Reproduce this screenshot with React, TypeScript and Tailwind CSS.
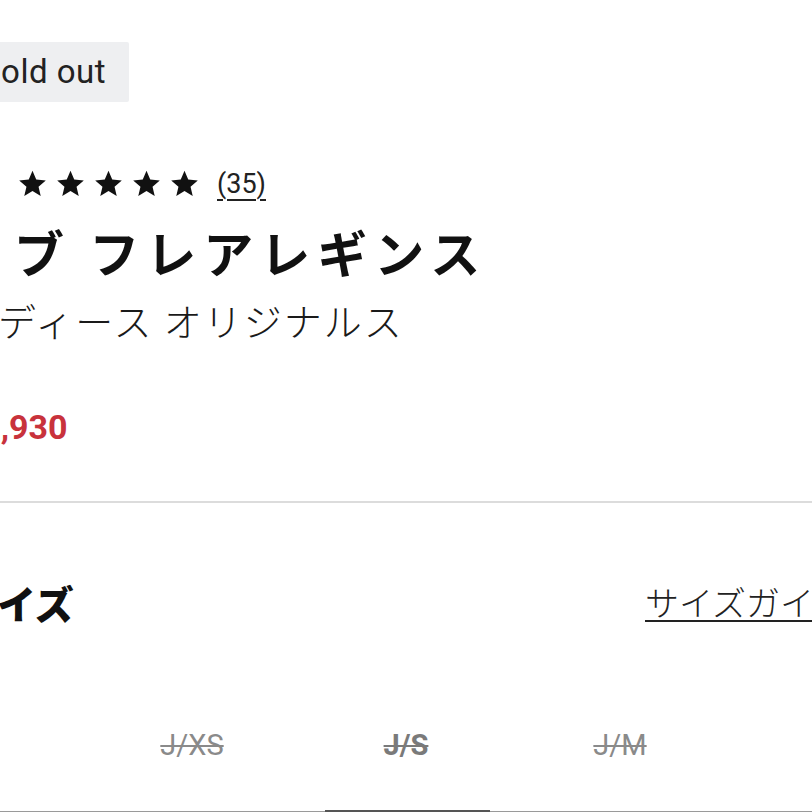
import React from 'react';

const jp = { fontFamily: '"Noto Sans CJK JP", "Noto Sans", sans-serif' };
const latin = { fontFamily: 'Roboto, "Noto Sans CJK JP", sans-serif' };

const sizes = [
  { label: 'J/XS', active: false },
  { label: 'J/S', active: true },
  { label: 'J/M', active: false },
  { label: 'J/L', active: false },
];

function Star() {
  return (
    <svg viewBox="0 0 24 24" className="h-[29px] w-[29px] shrink-0" fill="#111">
      <path d="M12 1.5l3.09 7.26 7.91.68-6 5.2 1.8 7.74L12 18.27 5.2 22.38l1.8-7.74-6-5.2 7.91-.68z" />
    </svg>
  );
}

export default function App() {
  return (
    <div className="w-[812px] h-[812px] overflow-hidden bg-white text-[#111]">
      <div className="flex flex-col pt-[42px]">
        {/* badge */}
        <div className="flex">
          <span
            className="ml-[-42px] h-[60px] px-[23px] flex items-center bg-[#eeeff1] rounded-[2px] text-[33px] tracking-[0.5px] text-[#222]"
            style={latin}
          >
            Sold out
          </span>
        </div>

        {/* rating */}
        <div className="mt-[69px] ml-[18px] h-[25px] flex items-center">
          <div className="flex gap-[9px]">
            <Star />
            <Star />
            <Star />
            <Star />
            <Star />
          </div>
          <span
            className="ml-[18px] text-[27px] leading-[30px] underline decoration-2 underline-offset-[6px] text-[#222]"
            style={latin}
          >
            (35)
          </span>
        </div>

        {/* title */}
        <h1
          className="mt-[25px] ml-[-43px] h-[60px] leading-[60px] text-[50px] font-bold tracking-[7px] whitespace-nowrap"
          style={jp}
        >
          リブ フレアレギンス
        </h1>

        {/* subtitle */}
        <p
          className="mt-[16px] ml-[-42px] leading-[46px] text-[38px] font-light tracking-[2px] whitespace-nowrap text-[#1a1a1a]"
          style={jp}
        >
          レディース オリジナルス
        </p>

        {/* price */}
        <p
          className="mt-[64px] ml-[-37px] leading-[40px] text-[34px] font-bold text-[#c8323c]"
          style={latin}
        >
          ¥1,930
        </p>

        <div className="mt-[54px] h-[2px] bg-[#dcdcdc]" />

        {/* size header */}
        <div className="mt-[77px] h-[44px] flex items-center whitespace-nowrap">
          <div className="w-[645px] shrink-0">
            <h2 className="ml-[-42px] text-[39px] leading-[44px] font-black" style={jp}>
              サイズ
            </h2>
          </div>
          <a
            className="shrink-0 text-[34px] leading-[40px] font-light underline decoration-2 underline-offset-[4px] text-[#222]"
            style={jp}
          >
            サイズガイド
          </a>
        </div>

        {/* size tabs */}
        <div className="mt-[57px] h-[132px] flex">
          <div className="w-[85px] shrink-0 border-b-2 border-[#9a9a9a]" />
          {sizes.map((s) => (
            <div
              key={s.label}
              className="relative w-[214px] shrink-0 flex items-center justify-center border-b-2 border-[#9a9a9a]"
            >
              <span
                className={
                  s.active
                    ? 'text-[29px] font-bold line-through text-[#7a7a7a]'
                    : 'text-[29px] line-through text-[#8a8a8a]'
                }
                style={latin}
              >
                {s.label}
              </span>
              {s.active && (
                <div className="absolute left-[26px] right-[23px] bottom-[-2px] h-[3px] bg-[#555]" />
              )}
            </div>
          ))}
        </div>
      </div>
    </div>
  );
}
